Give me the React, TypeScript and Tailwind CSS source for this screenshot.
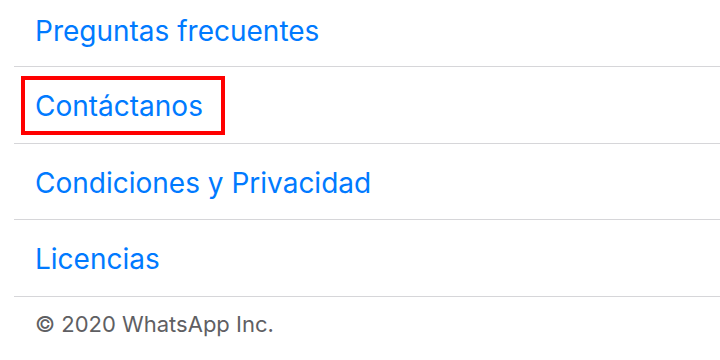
import React from "react";

const items = ["Preguntas frecuentes", "Contáctanos", "Condiciones y Privacidad", "Licencias"];

export default function App() {
  return (
    <div
      className="w-[720px] h-[360px] bg-white overflow-hidden"
      style={{ fontFamily: "Inter, 'Noto Sans', sans-serif" }}
    >
      <div className="pl-[14px]">
        {items.map((t, i) => (
          <div
            key={t}
            className={`${i === 0 ? "h-[67px] pb-[4px]" : "h-[76.5px] pt-[3px]"} relative border-b border-[#d6d6d9] flex items-center pl-[21px]`}
          >
            <span className="text-[28px] text-[#007aff] leading-none">{t}</span>
            {i === 1 && (
              <span className="absolute left-[7px] top-[8.5px] w-[204px] h-[59px] border-[4px] border-[#ff0000]" />
            )}
          </div>
        ))}
      </div>
      <div className="pl-[35px] pt-[16px] text-[22px] text-[#5f5f63] leading-none">© 2020 WhatsApp Inc.</div>
    </div>
  );
}
